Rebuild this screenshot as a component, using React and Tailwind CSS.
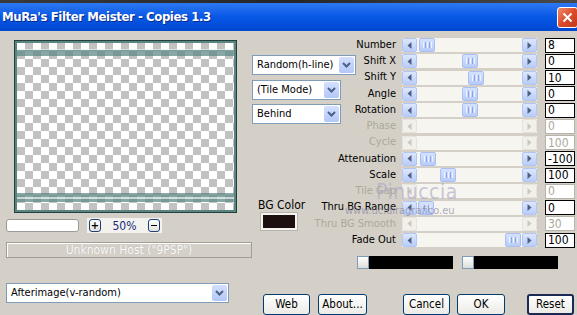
import React from 'react'

const sliders = [
  { label: 'Number', value: '8', thumb: 17 },
  { label: 'Shift X', value: '0', thumb: 60 },
  { label: 'Shift Y', value: '10', thumb: 66 },
  { label: 'Angle', value: '0', thumb: 60 },
  { label: 'Rotation', value: '0', thumb: 60 },
  { label: 'Phase', value: '0', disabled: true },
  { label: 'Cycle', value: '100', disabled: true },
  { label: 'Attenuation', value: '-100', thumb: 18 },
  { label: 'Scale', value: '100', thumb: 38 },
  { label: 'Tile Gap', value: '0', disabled: true },
  { label: 'Thru BG Range', value: '0', thumb: 16 },
  { label: 'Thru BG Smooth', value: '30', disabled: true },
  { label: 'Fade Out', value: '100', thumb: 103 },
]

function Arrow({ dir, disabled }) {
  return (
    <div
      className={
        disabled
          ? 'flex h-full w-[15px] shrink-0 items-center justify-center rounded-[2px] border border-[#e6e4da] bg-[#f1f0ea]'
          : 'flex h-full w-[15px] shrink-0 items-center justify-center rounded-[2px] border border-[#b1c6f4] bg-gradient-to-b from-[#dde7fd] to-[#b9cdf9]'
      }
    >
      <svg width="5" height="7" viewBox="0 0 5 7">
        <path d={dir === 'l' ? 'M4.5 0 L0.5 3.5 L4.5 7Z' : 'M0.5 0 L4.5 3.5 L0.5 7Z'} fill={disabled ? '#cac8bc' : '#4d6185'} />
      </svg>
    </div>
  )
}

function Scrollbar({ thumb, disabled }) {
  return (
    <div className="flex h-[14px] w-[135px] bg-[#f6f5f0]">
      <Arrow dir="l" disabled={disabled} />
      <div className="flex flex-1 items-stretch">
        {!disabled && (
          <div
            className="flex w-[16px] items-center justify-center gap-[1px] rounded-[2px] border border-[#a9bff3] bg-gradient-to-b from-[#d6e2fd] to-[#b8ccf9]"
            style={{ marginLeft: thumb - 15 }}
          >
            <span className="h-[6px] w-px bg-[#eef3ff]" />
            <span className="h-[6px] w-px bg-[#8ea5e2]" />
            <span className="h-[6px] w-px bg-[#eef3ff]" />
            <span className="h-[6px] w-px bg-[#8ea5e2]" />
            <span className="h-[6px] w-px bg-[#eef3ff]" />
          </div>
        )}
      </div>
      <Arrow dir="r" disabled={disabled} />
    </div>
  )
}

function Dropdown({ text, w }) {
  return (
    <div className={`flex h-[20px] items-center border border-[#7f9db9] bg-white ${w}`}>
      <span className="flex-1 whitespace-nowrap pl-[4px] text-[11px] text-black">{text}</span>
      <div className="mr-px flex h-[16px] w-[15px] items-center justify-center rounded-[2px] bg-gradient-to-b from-[#d3dffd] to-[#b3c7f8]">
        <svg width="9" height="6" viewBox="0 0 9 6">
          <path d="M1 1 L4.5 4.5 L8 1" stroke="#4d6185" strokeWidth="2" fill="none" />
        </svg>
      </div>
    </div>
  )
}

function Button({ children, w, isDefault }) {
  return (
    <div
      className={
        isDefault
          ? `flex h-[21px] items-center justify-center rounded-[3px] border-2 border-[#1b2a55] bg-gradient-to-b from-white to-[#ecebe6] text-[11.5px] text-black ${w}`
          : `flex h-[21px] items-center justify-center rounded-[3px] border border-[#003c74] bg-gradient-to-b from-white to-[#ecebe6] text-[11.5px] text-black ${w}`
      }
    >
      {children}
    </div>
  )
}

export default function App() {
  return (
    <div className="h-[315px] w-[577px] overflow-hidden bg-[#d4d0c8] font-['DejaVu_Sans_Condensed','Liberation_Sans',Arial,sans-serif]">
      {/* Title bar */}
      <div className="h-[3px] bg-gradient-to-r from-[#3a3a3a] via-[#262626] to-[#4a4a4a]" />
      <div className="flex h-[28px] items-center justify-between bg-gradient-to-b from-[#2d78f2] via-[#0757e6] to-[#0048d0]">
        <span className="pl-[2px] text-[13px] font-bold tracking-[-0.4px] text-white [text-shadow:1px_1px_0_#0b2a8a]">
          MuRa's Filter Meister - Copies 1.3
        </span>
        <div className="-mr-[1px] flex h-[21px] w-[21px] items-center justify-center rounded-[3px] border border-white bg-gradient-to-br from-[#ec8b69] via-[#db4b2b] to-[#c13a1c]">
          <svg width="11" height="11" viewBox="0 0 11 11">
            <path d="M1.5 1.5 L9.5 9.5 M9.5 1.5 L1.5 9.5" stroke="white" strokeWidth="2" />
          </svg>
        </div>
      </div>

      {/* Body */}
      <div className="relative flex h-[284px] flex-col">
        <div className="flex h-[240px] items-start">
          {/* Left column */}
          <div className="ml-[6px] flex w-[246px] flex-col">
            <div className="ml-[8px] mt-[9px] h-[173px] w-[223px] border border-[#22403c]">
              <div className="flex h-full w-full flex-col border-2 border-[#5a847f] bg-[image:repeating-conic-gradient(#c2c2c2_0%_25%,#ffffff_0%_50%)] bg-[length:16px_16px]">
                <div className="h-[6px]" />
                <div className="h-px bg-[#e4eeec]/80" />
                <div className="h-[6px] bg-[#5f8a85]/75" />
                <div className="flex-1" />
                <div className="h-[4px] bg-[#5f8a85]/75" />
                <div className="h-[2px] bg-[#c9dcd9]/80" />
                <div className="h-[3px] bg-[#5f8a85]/75" />
                <div className="h-[8px]" />
              </div>
            </div>

            <div className="mt-[5px] flex h-[15px] items-center">
              <div className="h-[13px] w-[73px] rounded-[3px] border border-[#9c9a94] bg-white" />
              <div className="ml-[8px] flex h-[15px] w-[75px] items-center justify-between bg-[#f3f2ee] px-[2px]">
                <div className="flex h-[13px] w-[12px] items-center justify-center rounded-[3px] border border-[#1c3f7a] bg-gradient-to-b from-white to-[#e4e3de] text-[11px] font-bold leading-none text-black">
                  +
                </div>
                <span className="text-[12px] text-[#1a2a78]">50%</span>
                <div className="flex h-[13px] w-[12px] items-center justify-center rounded-[3px] border border-[#1c3f7a] bg-gradient-to-b from-white to-[#e4e3de]">
                  <span className="h-px w-[6px] bg-black" />
                </div>
              </div>
            </div>

            <div className="mt-[9px] flex h-[16px] items-center justify-center border border-[#a29e96] shadow-[inset_1px_1px_0_#ffffff]">
              <span className="text-[12px] text-[#fbfbfb] [text-shadow:0_0_1px_#b0aca4]">Unknown Host ("9PSP")</span>
            </div>
          </div>

          {/* Middle column */}
          <div className="flex w-[105px] flex-col pt-[24px]">
            <Dropdown text="Random(h-line)" w="w-[104px]" />
            <div className="mt-[5px]">
              <Dropdown text="(Tile Mode)" w="w-[89px]" />
            </div>
            <div className="mt-[4px]">
              <Dropdown text="Behind" w="w-[89px]" />
            </div>
            <span className="ml-[6px] mt-[75px] text-[12px] leading-[13px] text-black">BG Color</span>
            <div className="ml-[9px] mt-px h-[17px] w-[36px] border-2 border-[#f4f3ef] bg-[#1d0f0f] shadow-[0_0_0_1px_#b8b4ac]" />
          </div>

          {/* Sliders */}
          <div className="flex w-[220px] flex-col pt-[6px]">
            {sliders.map(s => (
              <div key={s.label} className="flex h-[16.25px] items-center">
                <div className="flex w-[39px] justify-end whitespace-nowrap">
                  <span className={s.disabled ? 'text-[11px] text-[#aca899]' : 'text-[11px] text-black'}>
                    {s.label}
                  </span>
                </div>
                <div className="ml-[6px]">
                  <Scrollbar thumb={s.thumb} disabled={s.disabled} />
                </div>
                <div
                  className={
                    s.disabled
                      ? 'ml-[8px] flex h-[15px] w-[30px] items-center border border-[#b6b3aa] bg-white pl-[2px] text-[12px] text-[#aca899]'
                      : 'ml-[8px] flex h-[15px] w-[30px] items-center border border-black bg-white pl-[2px] text-[12px] text-black'
                  }
                >
                  {s.value}
                </div>
              </div>
            ))}
            <div className="mt-[8px] flex gap-[9px]">
              <div className="flex h-[13px] w-[96px] bg-black">
                <div className="h-[13px] w-[12px] border border-[#7f9db9] bg-gradient-to-b from-white to-[#dcdcd8]" />
              </div>
              <div className="flex h-[13px] w-[96px] bg-black">
                <div className="h-[13px] w-[12px] border border-[#7f9db9] bg-gradient-to-b from-white to-[#dcdcd8]" />
              </div>
            </div>
          </div>
        </div>

        {/* Bottom row */}
        <div className="flex items-start">
          <div className="ml-[6px] mt-[13px]">
            <Dropdown text="Afterimage(v-random)" w="w-[223px]" />
          </div>
          <div className="ml-[34px] mt-[24px] flex">
            <Button w="w-[47px]">Web</Button>
            <div className="ml-[8px]">
              <Button w="w-[49px]">About...</Button>
            </div>
            <div className="ml-[36px]">
              <Button w="w-[47px]">Cancel</Button>
            </div>
            <div className="ml-[7px]">
              <Button w="w-[48px]">OK</Button>
            </div>
            <div className="ml-[22px]">
              <Button w="w-[47px]" isDefault>Reset</Button>
            </div>
          </div>
        </div>

        {/* Watermark */}
        <div className="pointer-events-none absolute left-[376px] top-[146px] text-[21px] tracking-[0.5px] text-[#aaa4c4]/60">
          Pinuccia
        </div>
        <div className="pointer-events-none absolute left-[345px] top-[172px] text-[11px] text-[#8a879c]/70">
          www.ucidiragrafico.eu
        </div>
      </div>
    </div>
  )
}
